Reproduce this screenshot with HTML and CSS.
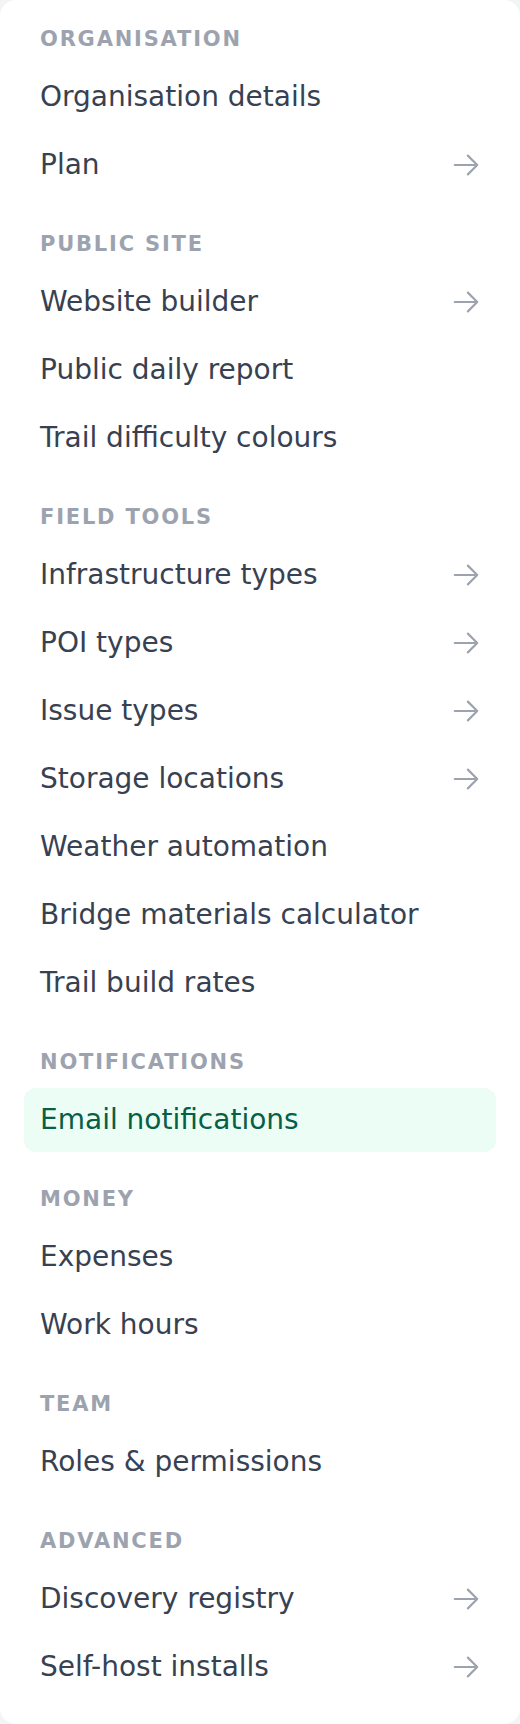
FILE: index.html
```html
<!DOCTYPE html>
<html lang="en">
<head>
<meta charset="utf-8">
<title>Settings</title>
<link rel="stylesheet" href="styles.css">
</head>
<body>
<nav class="card">
  <section class="group">
    <h2 class="label">Organisation</h2>
    <a class="item">Organisation details</a>
    <a class="item">Plan<svg class="arrow" viewBox="0 0 24 24" fill="none" stroke="currentColor" stroke-width="1.7" stroke-linecap="round" stroke-linejoin="round"><path d="M13.5 4.5 21 12m0 0-7.5 7.5M21 12H3"/></svg></a>
  </section>
  <section class="group">
    <h2 class="label">Public site</h2>
    <a class="item">Website builder<svg class="arrow" viewBox="0 0 24 24" fill="none" stroke="currentColor" stroke-width="1.7" stroke-linecap="round" stroke-linejoin="round"><path d="M13.5 4.5 21 12m0 0-7.5 7.5M21 12H3"/></svg></a>
    <a class="item">Public daily report</a>
    <a class="item">Trail difficulty colours</a>
  </section>
  <section class="group">
    <h2 class="label">Field tools</h2>
    <a class="item">Infrastructure types<svg class="arrow" viewBox="0 0 24 24" fill="none" stroke="currentColor" stroke-width="1.7" stroke-linecap="round" stroke-linejoin="round"><path d="M13.5 4.5 21 12m0 0-7.5 7.5M21 12H3"/></svg></a>
    <a class="item">POI types<svg class="arrow" viewBox="0 0 24 24" fill="none" stroke="currentColor" stroke-width="1.7" stroke-linecap="round" stroke-linejoin="round"><path d="M13.5 4.5 21 12m0 0-7.5 7.5M21 12H3"/></svg></a>
    <a class="item">Issue types<svg class="arrow" viewBox="0 0 24 24" fill="none" stroke="currentColor" stroke-width="1.7" stroke-linecap="round" stroke-linejoin="round"><path d="M13.5 4.5 21 12m0 0-7.5 7.5M21 12H3"/></svg></a>
    <a class="item">Storage locations<svg class="arrow" viewBox="0 0 24 24" fill="none" stroke="currentColor" stroke-width="1.7" stroke-linecap="round" stroke-linejoin="round"><path d="M13.5 4.5 21 12m0 0-7.5 7.5M21 12H3"/></svg></a>
    <a class="item">Weather automation</a>
    <a class="item">Bridge materials calculator</a>
    <a class="item">Trail build rates</a>
  </section>
  <section class="group">
    <h2 class="label">Notifications</h2>
    <a class="item active">Email notifications</a>
  </section>
  <section class="group">
    <h2 class="label">Money</h2>
    <a class="item">Expenses</a>
    <a class="item">Work hours</a>
  </section>
  <section class="group">
    <h2 class="label">Team</h2>
    <a class="item">Roles &amp; permissions</a>
  </section>
  <section class="group">
    <h2 class="label">Advanced</h2>
    <a class="item">Discovery registry<svg class="arrow" viewBox="0 0 24 24" fill="none" stroke="currentColor" stroke-width="1.7" stroke-linecap="round" stroke-linejoin="round"><path d="M13.5 4.5 21 12m0 0-7.5 7.5M21 12H3"/></svg></a>
    <a class="item">Self-host installs<svg class="arrow" viewBox="0 0 24 24" fill="none" stroke="currentColor" stroke-width="1.7" stroke-linecap="round" stroke-linejoin="round"><path d="M13.5 4.5 21 12m0 0-7.5 7.5M21 12H3"/></svg></a>
  </section>
</nav>
</body>
</html>
```

FILE: styles.css
```css
* { box-sizing: border-box; }

html, body {
  margin: 0;
  padding: 0;
  background: #f3f4f6;
}

body {
  font-family: "DejaVu Sans", "Noto Sans", sans-serif;
}

.card {
  background: #ffffff;
  border-radius: 16px;
  padding: 25px 24px 25px;
  display: flex;
  flex-direction: column;
  gap: 33px;
  min-height: 1724px;
}

.group {
  display: flex;
  flex-direction: column;
  gap: 4px;
}

.label {
  margin: 0 0 8px;
  padding-left: 16px;
  font-size: 21px;
  line-height: 28px;
  font-weight: 700;
  letter-spacing: 1.8px;
  text-transform: uppercase;
  color: #9ca3af;
}

.item {
  display: flex;
  align-items: center;
  justify-content: space-between;
  height: 64px;
  padding: 11px 15px 11px 16px;
  font-size: 28px;
  line-height: 42px;
  color: #374151;
  border-radius: 12px;
  text-decoration: none;
}

.item.active {
  background: #ecfdf5;
  color: #065f46;
}

.arrow {
  width: 30px;
  height: 30px;
  flex: none;
  color: #9ca3af;
}
```
